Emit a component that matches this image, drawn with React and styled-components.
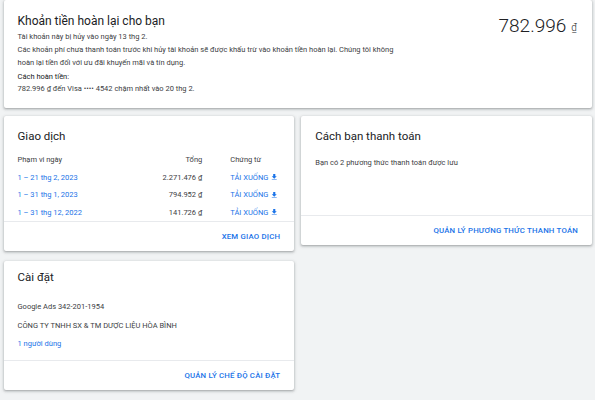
import React from "react";
import styled, { createGlobalStyle } from "styled-components";

const GlobalStyle = createGlobalStyle`
  html, body {
    margin: 0;
    padding: 0;
    background: #f1f3f4;
  }
  body {
    font-family: Roboto, "Noto Sans", "Liberation Sans", sans-serif;
    color: #3c4043;
  }
`;

const Page = styled.div`
  width: 595px;
  height: 400px;
  box-sizing: border-box;
  padding: 0 3px 0 3.5px;
  background: #f1f3f4;
  overflow: hidden;
`;

const Card = styled.div`
  background: #fff;
  border-radius: 2px;
  box-shadow: 0 1px 2px 0 rgba(60, 64, 67, 0.3), 0 1px 3px 1px rgba(60, 64, 67, 0.15);
  display: flex;
  flex-direction: column;
`;

const RefundCard = styled(Card)`
  height: 108px;
  box-sizing: border-box;
  flex-direction: row;
  justify-content: space-between;
  padding: 12px 14px 0 14px;
  margin-bottom: 8px;
`;

const RefundInfo = styled.div`
  width: 385px;
`;

const BigTitle = styled.div`
  font-size: 12px;
  line-height: 18px;
  color: #202124;
`;

const Line = styled.p`
  margin: 0 0 ${(p) => p.$gap || 0}px 0;
  font-size: 7.5px;
  line-height: ${(p) => p.$lh || 13}px;
  color: ${(p) => (p.$strong ? "#202124" : "#3c4043")};
`;

const Amount = styled.div`
  font-size: 19px;
  line-height: 22px;
  font-weight: 300;
  color: #202124;
  margin-top: 3px;
  margin-right: 1px;
  white-space: nowrap;
`;

const Dong = styled.span`
  font-size: 10px;
  vertical-align: top;
  margin-left: 5px;
  position: relative;
  top: 2px;
`;

const Grid = styled.div`
  display: grid;
  grid-template-columns: 1fr 1fr;
  column-gap: 7px;
  align-items: start;
`;

const Column = styled.div`
  display: flex;
  flex-direction: column;
  gap: ${(p) => p.$gap || 0}px;
`;

const Body = styled.div`
  padding: ${(p) => p.$top || 12}px 14px 0 14px;
  min-height: ${(p) => p.$min || 0}px;
  box-sizing: border-box;
`;

const Title = styled.div`
  font-size: 11.5px;
  line-height: 16px;
  color: #202124;
  margin-bottom: ${(p) => p.$mb || 0}px;
`;

const Table = styled.div`
  display: grid;
  grid-template-columns: 1fr auto 50px;
  column-gap: 28px;
  font-size: 7.5px;
  line-height: 17.5px;
`;

const Head = styled.div`
  color: #3c4043;
  text-align: ${(p) => (p.$right ? "right" : "left")};
`;

const Cell = styled.div`
  color: ${(p) => (p.$link ? "#1a73e8" : "#3c4043")};
  text-align: ${(p) => (p.$right ? "right" : "left")};
  white-space: nowrap;
`;

const Download = styled.span`
  display: inline-flex;
  align-items: center;
  gap: 1.5px;
  color: #1a73e8;
  text-transform: uppercase;
  white-space: nowrap;

  svg {
    width: 8.5px;
    height: 8.5px;
    fill: currentColor;
  }
`;

const Text = styled.div`
  font-size: 7.5px;
  line-height: ${(p) => p.$lh || 12}px;
  min-height: ${(p) => p.$lh || 12}px;
  color: ${(p) => (p.$link ? "#1a73e8" : "#3c4043")};
  margin-top: ${(p) => p.$mt || 0}px;
`;

const Footer = styled.div`
  border-top: 1px solid #e8eaed;
  height: 29px;
  display: flex;
  align-items: center;
  justify-content: flex-end;
  padding: 0 14px;
`;

const Action = styled.span`
  font-size: 7.8px;
  font-weight: 500;
  letter-spacing: 0.2px;
  color: #1a73e8;
  text-transform: uppercase;
`;

const DownloadIcon = () => (
  <svg viewBox="0 0 24 24">
    <path d="M19 9h-4V3H9v6H5l7 7 7-7zM5 18v2h14v-2H5z" />
  </svg>
);

const rows = [
  { range: "1 – 21 thg 2, 2023", total: "2.271.476 ₫" },
  { range: "1 – 31 thg 1, 2023", total: "794.952 ₫" },
  { range: "1 – 31 thg 12, 2022", total: "141.726 ₫" },
];

export default function App() {
  return (
    <Page>
      <GlobalStyle />
      <RefundCard>
        <RefundInfo>
          <BigTitle>Khoản tiền hoàn lại cho bạn</BigTitle>
          <Line>Tài khoản này bị hủy vào ngày 13 thg 2.</Line>
          <Line $gap={2}>
            Các khoản phí chưa thanh toán trước khi hủy tài khoản sẽ được khấu trừ vào khoản tiền hoàn lại. Chúng tôi không hoàn lại tiền đối với ưu đãi khuyến mãi và tín dụng.
          </Line>
          <Line $lh={11.5} $strong>Cách hoàn tiền:</Line>
          <Line $lh={11.5}>782.996 ₫ đến Visa •••• 4542 chậm nhất vào 20 thg 2.</Line>
        </RefundInfo>
        <Amount>
          782.996<Dong>₫</Dong>
        </Amount>
      </RefundCard>

      <Grid>
        <Column $gap={10}>
          <Card>
            <Body>
              <Title $mb={7}>Giao dịch</Title>
              <Table>
                <Head>Phạm vi ngày</Head>
                <Head $right>Tổng</Head>
                <Head>Chứng từ</Head>
                {rows.map((r) => (
                  <React.Fragment key={r.range}>
                    <Cell $link>{r.range}</Cell>
                    <Cell $right>{r.total}</Cell>
                    <Cell>
                      <Download>
                        Tải xuống
                        <DownloadIcon />
                      </Download>
                    </Cell>
                  </React.Fragment>
                ))}
              </Table>
            </Body>
            <Footer>
              <Action>Xem giao dịch</Action>
            </Footer>
          </Card>

          <Card>
            <Body $top={8}>
              <Title $mb={13}>Cài đặt</Title>
              <Text $lh={18.5}>Google Ads 342-201-1954</Text>
              <Text $lh={18.5}>CÔNG TY TNHH SX &amp; TM DƯỢC LIỆU HÒA BÌNH</Text>
              <Text $lh={18.5} $link>1 người dùng</Text>
              <Text $lh={6} />
            </Body>
            <Footer>
              <Action>Quản lý chế độ cài đặt</Action>
            </Footer>
          </Card>
        </Column>

        <Card>
          <Body $min={99}>
            <Title>Cách bạn thanh toán</Title>
            <Text $mt={13}>Bạn có 2 phương thức thanh toán được lưu</Text>
          </Body>
          <Footer>
            <Action>Quản lý phương thức thanh toán</Action>
          </Footer>
        </Card>
      </Grid>
    </Page>
  );
}
